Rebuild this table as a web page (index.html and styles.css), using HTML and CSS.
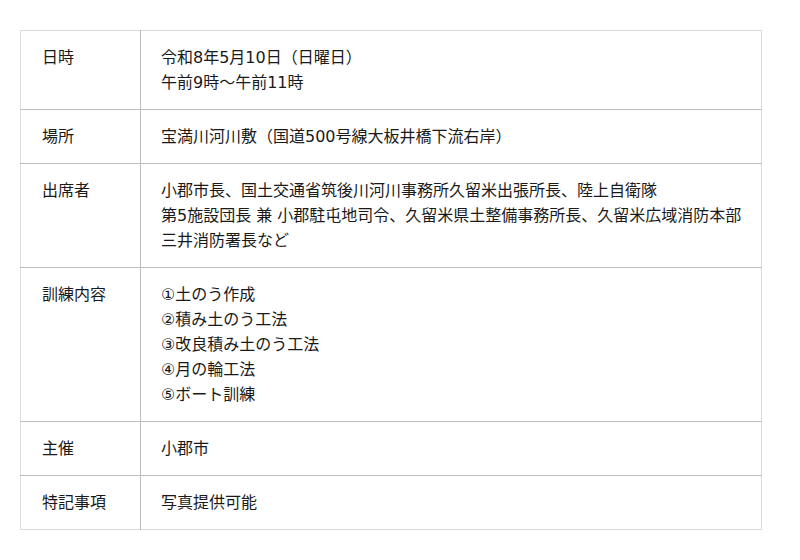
FILE: index.html
```html
<!DOCTYPE html>
<html lang="ja">
<head>
<meta charset="UTF-8" />
<meta name="viewport" content="width=device-width, initial-scale=1" />
<title>訓練概要</title>
<link rel="stylesheet" href="styles.css">
</head>
<body>

<table class="outline">
  <tr>
    <th>日時</th>
    <td>令和8年5月10日（日曜日）<br>午前9時～午前11時</td>
  </tr>
  <tr>
    <th>場所</th>
    <td>宝満川河川敷（国道500号線大板井橋下流右岸）</td>
  </tr>
  <tr>
    <th>出席者</th>
    <td>小郡市長、国土交通省筑後川河川事務所久留米出張所長、陸上自衛隊<br>第5施設団長 兼 小郡駐屯地司令、久留米県土整備事務所長、久留米広域消防本部<br>三井消防署長など</td>
  </tr>
  <tr>
    <th>訓練内容</th>
    <td>①土のう作成<br>②積み土のう工法<br>③改良積み土のう工法<br>④月の輪工法<br>⑤ボート訓練</td>
  </tr>
  <tr>
    <th>主催</th>
    <td>小郡市</td>
  </tr>
  <tr>
    <th>特記事項</th>
    <td>写真提供可能</td>
  </tr>
</table>

</body>
</html>
```

FILE: styles.css
```css
body {
  margin: 0;
  padding: 30px 38px 0 20px;
  background: #fff;
  color: #1a1a1a;
  font-family: "DejaVu Sans", "Noto Sans CJK JP", sans-serif;
  font-size: 16px;
  line-height: 25px;
}

/* 概要テーブル */
.outline {
  width: 742px;
  table-layout: fixed;
  border-collapse: collapse;
  border: 1px solid #dcdcdc;
}

.outline th,
.outline td {
  padding: 14px 21px;
  text-align: left;
  vertical-align: top;
  font-weight: normal;
  white-space: nowrap;
}

.outline td {
  padding-left: 20px;
}

.outline tr + tr th,
.outline tr + tr td {
  border-top: 1px solid #bdbdbd;
}

.outline th {
  width: 77px;
  border-right: 1px solid #bdbdbd;
}
```
